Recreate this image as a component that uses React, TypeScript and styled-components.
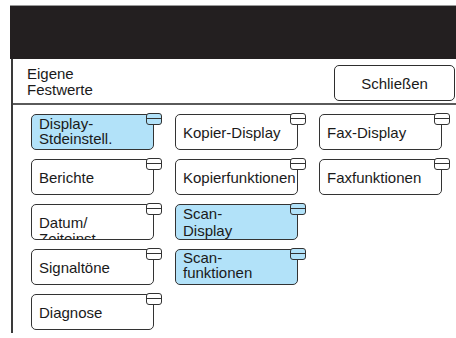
import React from "react";
import styled, { createGlobalStyle } from "styled-components";

const Global = createGlobalStyle`
  html, body { margin: 0; padding: 0; background: #ffffff; }
  body { font-family: "Liberation Sans", Arial, sans-serif; }
`;

const Page = styled.div`
  width: 456px;
  height: 338px;
  padding: 5px 0 0 10px;
  box-sizing: border-box;
  display: flex;
  flex-direction: column;
  background: #fff;
`;

const TopBar = styled.div`
  height: 54px;
  background: #231f20;
  border-top: 1px solid #9a9a9a;
  box-sizing: border-box;
`;

const Panel = styled.div`
  margin-left: 1px;
  height: 274px;
  border-left: 2px solid #3a3a3a;
  display: flex;
  flex-direction: column;
`;

const Header = styled.div`
  display: flex;
  align-items: center;
  justify-content: space-between;
  padding: 0 1px 0 14px;
  border-bottom: 2px solid #5a5a5a;
  box-sizing: border-box;
  height: 46px;
`;

const Title = styled.div`
  font-size: 15px;
  line-height: 16px;
  color: #1a1a1a;
  margin-top: 2px;
`;

const CloseButton = styled.button`
  width: 121px;
  height: 36px;
  margin-top: 4px;
  border: 1.5px solid #2e2e2e;
  border-radius: 5px;
  background: #fff;
  font-family: "Liberation Sans", Arial, sans-serif;
  font-size: 15px;
  color: #1a1a1a;
  padding: 0;
`;

const Grid = styled.div`
  display: grid;
  grid-template-columns: repeat(3, 123px);
  grid-auto-rows: 36px;
  column-gap: 21px;
  row-gap: 9px;
  padding: 9px 0 0 18px;
`;

const Cell = styled.div<{ $col: number; $row: number }>`
  grid-column: ${(p) => p.$col};
  grid-row: ${(p) => p.$row};
  position: relative;
`;

const Btn = styled.div<{ $active?: boolean; $pad?: number; $lh?: number }>`
  height: 100%;
  box-sizing: border-box;
  border: 1.5px solid #333;
  border-radius: 5px;
  background: ${(p) => (p.$active ? "#b2e2f9" : "#fff")};
  display: flex;
  align-items: ${(p) => (p.$pad !== undefined ? "flex-start" : "center")};
  padding: ${(p) => (p.$pad !== undefined ? `${p.$pad}px 0 0 7px` : "0 0 0 7px")};
  overflow: hidden;
  font-size: 15px;
  line-height: ${(p) => p.$lh ?? 15}px;
  color: #1a1a1a;
  white-space: pre;
`;

const Tab = styled.div<{ $active?: boolean }>`
  position: absolute;
  top: -1px;
  right: -8px;
  width: 16px;
  height: 12px;
  box-sizing: border-box;
  border: 1.5px solid #333;
  border-radius: 3px;
  background: ${(p) => (p.$active ? "#b2e2f9" : "#fff")};
  &::after {
    content: "";
    position: absolute;
    left: 0;
    right: 0;
    top: 3.5px;
    border-top: 1.5px solid #333;
  }
`;

type Item = { label: string; col: number; row: number; active?: boolean; pad?: number; lh?: number };

const items: Item[] = [
  { label: "Display-\nStdeinstell.", col: 1, row: 1, active: true, pad: 1 },
  { label: "Berichte", col: 1, row: 2 },
  { label: "Datum/\nZeiteinst.", col: 1, row: 3, pad: 10, lh: 16 },
  { label: "Signaltöne", col: 1, row: 4 },
  { label: "Diagnose", col: 1, row: 5 },
  { label: "Kopier-Display", col: 2, row: 1 },
  { label: "Kopierfunktionen", col: 2, row: 2 },
  { label: "Scan-\nDisplay", col: 2, row: 3, active: true, pad: 0, lh: 17 },
  { label: "Scan-\nfunktionen", col: 2, row: 4, active: true, pad: 0, lh: 15 },
  { label: "Fax-Display", col: 3, row: 1 },
  { label: "Faxfunktionen", col: 3, row: 2 },
];

export default function App() {
  return (
    <>
      <Global />
      <Page>
        <TopBar />
        <Panel>
          <Header>
            <Title>
              Eigene
              <br />
              Festwerte
            </Title>
            <CloseButton>Schließen</CloseButton>
          </Header>
          <Grid>
            {items.map((it) => (
              <Cell key={it.label} $col={it.col} $row={it.row}>
                <Btn $active={it.active} $pad={it.pad} $lh={it.lh}>
                  {it.label}
                </Btn>
                <Tab $active={it.active} />
              </Cell>
            ))}
          </Grid>
        </Panel>
      </Page>
    </>
  );
}
